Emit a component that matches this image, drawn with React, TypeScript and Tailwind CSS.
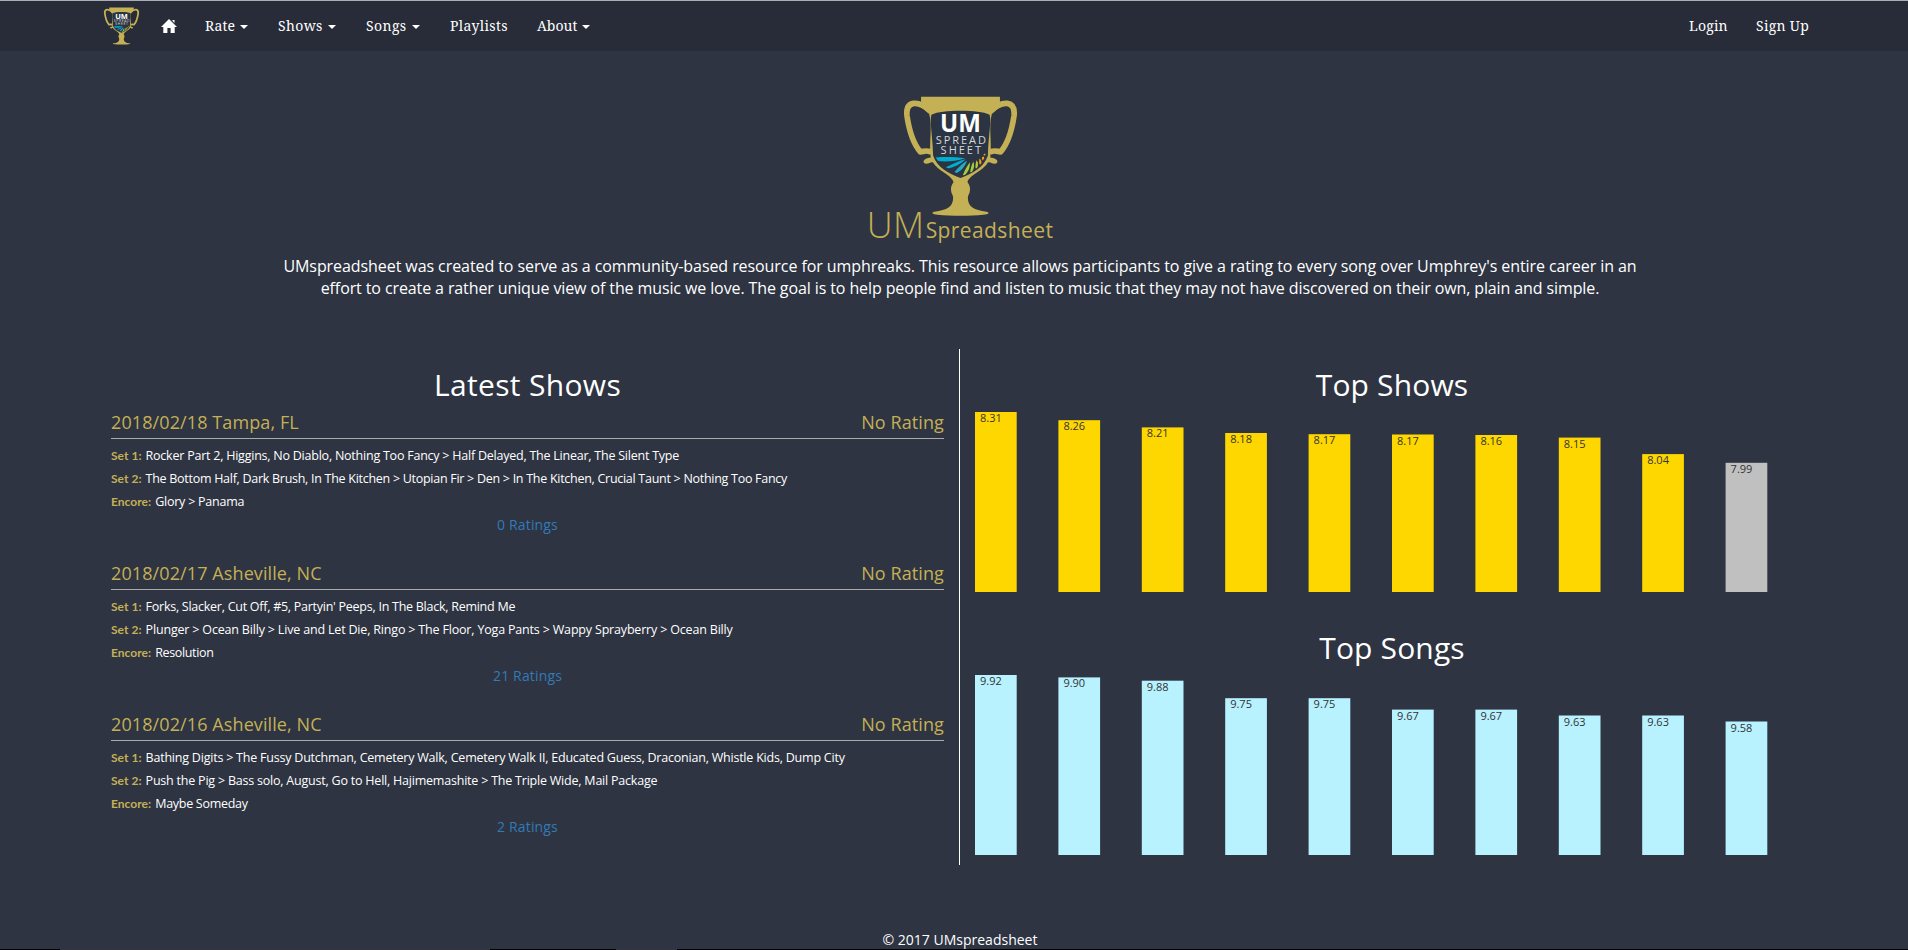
type SetLine = { label: string; songs: string; tracking: string };
type Show = { date: string; place: string; ratings: string; sets: SetLine[] };

const shows: Show[] = [
  {
    date: "2018/02/18",
    place: "Tampa, FL",
    ratings: "0 Ratings",
    sets: [
      { label: "Set 1:", songs: "Rocker Part 2, Higgins, No Diablo, Nothing Too Fancy > Half Delayed, The Linear, The Silent Type", tracking: "tracking-[-0.232px]" },
      { label: "Set 2:", songs: "The Bottom Half, Dark Brush, In The Kitchen > Utopian Fir > Den > In The Kitchen, Crucial Taunt > Nothing Too Fancy", tracking: "tracking-[-0.28px]" },
      { label: "Encore:", songs: "Glory > Panama", tracking: "tracking-[-0.24px]" },
    ],
  },
  {
    date: "2018/02/17",
    place: "Asheville, NC",
    ratings: "21 Ratings",
    sets: [
      { label: "Set 1:", songs: "Forks, Slacker, Cut Off, #5, Partyin' Peeps, In The Black, Remind Me", tracking: "tracking-[-0.26px]" },
      { label: "Set 2:", songs: "Plunger > Ocean Billy > Live and Let Die, Ringo > The Floor, Yoga Pants > Wappy Sprayberry > Ocean Billy", tracking: "tracking-[-0.18px]" },
      { label: "Encore:", songs: "Resolution", tracking: "tracking-[-0.35px]" },
    ],
  },
  {
    date: "2018/02/16",
    place: "Asheville, NC",
    ratings: "2 Ratings",
    sets: [
      { label: "Set 1:", songs: "Bathing Digits > The Fussy Dutchman, Cemetery Walk, Cemetery Walk II, Educated Guess, Draconian, Whistle Kids, Dump City", tracking: "tracking-[-0.217px]" },
      { label: "Set 2:", songs: "Push the Pig > Bass solo, August, Go to Hell, Hajimemashite > The Triple Wide, Mail Package", tracking: "tracking-[-0.215px]" },
      { label: "Encore:", songs: "Maybe Someday", tracking: "tracking-[-0.28px]" },
    ],
  },
];

type Bar = { value: string; top: number; color: string };
const gold = "#ffd700";
const silver = "#c0c0c0";
const ice = "#b8f2ff";

const topShows: Bar[] = [
  { value: "8.31", top: 0, color: gold },
  { value: "8.26", top: 8.2, color: gold },
  { value: "8.21", top: 15.4, color: gold },
  { value: "8.18", top: 21, color: gold },
  { value: "8.17", top: 22.2, color: gold },
  { value: "8.17", top: 22.5, color: gold },
  { value: "8.16", top: 23, color: gold },
  { value: "8.15", top: 25.6, color: gold },
  { value: "8.04", top: 42.1, color: gold },
  { value: "7.99", top: 50.8, color: silver },
];

const topSongs: Bar[] = [
  { value: "9.92", top: 0, color: ice },
  { value: "9.90", top: 2.4, color: ice },
  { value: "9.88", top: 5.7, color: ice },
  { value: "9.75", top: 23.2, color: ice },
  { value: "9.75", top: 23.2, color: ice },
  { value: "9.67", top: 34.6, color: ice },
  { value: "9.67", top: 34.6, color: ice },
  { value: "9.63", top: 40.5, color: ice },
  { value: "9.63", top: 40.5, color: ice },
  { value: "9.58", top: 46.5, color: ice },
];

function Chart({ bars }: { bars: Bar[] }) {
  return (
    <svg className="mt-[11px] block h-[180px] w-[834px] overflow-visible" viewBox="0 0 834 180">
      {bars.map((b, i) => (
        <g key={i}>
          <rect x={i * 83.4} y={b.top} width={41.7} height={180 - b.top} fill={b.color} />
          <text x={i * 83.4 + 5} y={Math.round(b.top) + 10} className="fill-[#333] font-['Open_Sans',sans-serif] text-[11px]">
            {b.value}
          </text>
        </g>
      ))}
    </svg>
  );
}

function Trophy({ className }: { className: string }) {
  return (
    <svg className={className} viewBox="155 45 350 365">
      <g fill="none" stroke="#c4b055" strokeWidth="17" strokeLinejoin="round" strokeLinecap="round">
        <path d="M238 92C216 70 200 69 190 70C170 73 168 92 170 108C176 148 190 192 210 215C220 214 226 210 238 214" />
        <path d="M422 92C444 70 460 69 470 70C490 73 492 92 490 108C484 148 470 192 450 215C440 214 434 210 422 214" />
      </g>
      <path d="M236 100C247 140 235 190 241 232C216 234 214 250 228 251C238 251 240 244 248 247C262 272 306 286 309 306C303 314 300 324 302 332C302 340 308 344 308 352C308 380 290 390 252 394C242 396 244 402 262 403C300 407 360 407 398 403C416 402 418 396 408 394C370 390 352 380 352 352C352 344 358 340 358 332C360 324 357 314 351 306C354 286 398 272 412 247C420 244 422 251 432 251C446 250 444 234 419 232C425 190 413 140 424 100C434 94 446 84 448 70V50H212V70C214 84 226 94 236 100Z" fill="#c4b055" />
      <path d="M243 104C262 95 290 92 330 92C370 92 398 95 417 104C423 124 413 170 412 226C400 262 366 280 330 293C294 280 260 262 248 226C247 170 237 124 243 104Z" fill="#2b3442" />
      <path d="M256 232C286 229 318 231 344 234C318 243 280 246 262 242Z" fill="#00aed0" />
      <path d="M286 261C308 250 326 241 346 237C332 250 310 262 292 264Z" fill="#00aed0" />
      <path d="M312 275C324 262 334 250 350 241C344 258 334 271 319 278Z" fill="#25a9c4" />
      <path d="M337 285C342 270 350 257 358 246C359 260 354 275 343 284Z" fill="#a5cd39" />
      <path d="M359 276C360 264 364 254 368 244C373 254 371 266 364 275Z" fill="#a5cd39" />
      <path d="M375 264C374 254 376 247 378 240C384 247 384 256 379 264Z" fill="#b9c832" />
      <path d="M387 252C385 246 386 240 387 235C393 240 394 246 391 252Z" fill="#f49b20" />
      <path d="M395 241L394 231L400 229L401 236ZM400 226L399 222L404 220L405 225Z" fill="#f49b20" />
      <text x="330" y="157" textAnchor="middle" textLength="122" lengthAdjust="spacingAndGlyphs" className="fill-white font-['Open_Sans',sans-serif] text-[73px] font-bold">UM</text>
      <text x="331" y="191" textAnchor="middle" textLength="150" className="fill-[#d4d7dc] font-['Open_Sans',sans-serif] text-[33px]">SPREAD</text>
      <text x="331" y="221" textAnchor="middle" textLength="121" className="fill-[#d4d7dc] font-['Open_Sans',sans-serif] text-[33px]">SHEET</text>
    </svg>
  );
}

function Caret() {
  return (
    <svg className="ml-[5px] mt-[3px] h-1 w-2" viewBox="0 0 8 4">
      <path d="M0 0H8L4 4Z" fill="#fff" />
    </svg>
  );
}

function NavItem({ label, width, tracking, caret }: { label: string; width: string; tracking: string; caret?: boolean }) {
  return (
    <a className={`flex items-center ${width}`}>
      <span className={tracking}>{label}</span>
      {caret && <Caret />}
    </a>
  );
}

export default function App() {
  return (
    <div className="flex h-screen flex-col overflow-hidden whitespace-nowrap bg-[#2e3442] font-['Open_Sans',sans-serif] text-white">
      <header className="h-[51px] shrink-0 border-t border-[#abadb1] bg-[#272c38]">
        <nav className="flex h-[49px] items-center pl-[103px] pr-[99px] font-['Noto_Serif','DejaVu_Serif',serif] text-[14px] leading-5">
          <Trophy className="h-[38px] w-[37px]" />
          <svg className="ml-[21px] mr-[28px] mt-px h-[14px] w-4" viewBox="0 0 16 14">
            <path d="M8 0L16 8H13.7V14H9.6V9H6.4V14H2.3V8H0L8 0ZM11.5 1H13.5V4L11.5 2Z" fill="#fff" />
          </svg>
          <NavItem label="Rate" width="w-[73px]" tracking="tracking-[0.2px]" caret />
          <NavItem label="Shows" width="w-[88px]" tracking="tracking-[0.35px]" caret />
          <NavItem label="Songs" width="w-[84px]" tracking="tracking-[0.4px]" caret />
          <NavItem label="Playlists" width="w-[87px]" tracking="tracking-[0.35px]" />
          <NavItem label="About" width="w-[80px]" tracking="tracking-[0px]" caret />
          <div className="ml-auto flex">
            <NavItem label="Login" width="w-[67px]" tracking="tracking-[0.2px]" />
            <NavItem label="Sign Up" width="w-[53px]" tracking="tracking-[0.3px]" />
          </div>
        </nav>
      </header>

      <main className="ml-[96px] w-[1728px] shrink-0 pt-[44px]">
        <div className="flex flex-col items-center">
          <Trophy className="h-[122px] w-[117px]" />
          <h1 className="mt-[-12px] flex h-[39px] items-baseline text-[#c4b055]">
            <span className="text-[36px] leading-10 font-light tracking-[0.5px]">UM</span>
            <span className="ml-px text-[21px] leading-6 tracking-[0.4px]">Spreadsheet</span>
          </h1>
          <p className="mt-[11px] text-center text-[16px] leading-[22px]">
            <span className="tracking-[-0.075px]">
              UMspreadsheet was created to serve as a community-based resource for umphreaks. This resource allows participants to give a rating to every song over Umphrey's entire career in an
            </span>
            <br />
            <span className="tracking-[-0.108px]">
              effort to create a rather unique view of the music we love. The goal is to help people find and listen to music that they may not have discovered on their own, plain and simple.
            </span>
          </p>
        </div>

        <div className="mt-[50px] flex h-[516px]">
          <section className="w-[864px] border-r border-white pl-[15px] pr-[15px] pt-[19px]">
            <h2 className="mb-[10px] text-center text-[30px] leading-[33px] tracking-[0.33px]">Latest Shows</h2>
            {shows.map((s) => (
              <article key={s.date} className="mb-[27px]">
                <div className="flex h-[28px] justify-between border-b border-[#abaaa6] text-[18px] leading-[22px] tracking-[0.1px] text-[#c4b055]">
                  <span>{s.date} {s.place}</span>
                  <span>No Rating</span>
                </div>
                <div className="mt-[5px]">
                  {s.sets.map((l) => (
                    <div key={l.label} className="flex h-[23px] items-baseline gap-1 leading-[23px]">
                      <span className="font-['Lato',sans-serif] text-[12px] font-bold tracking-[0.04px] text-[#c4b055]">{l.label}</span>
                      <span className={`text-[12.5px] ${l.tracking}`}>{l.songs}</span>
                    </div>
                  ))}
                </div>
                <div className="mt-[2px] text-center text-[14px] leading-5 font-medium tracking-[0.15px] text-[#337ab7]">{s.ratings}</div>
              </article>
            ))}
          </section>

          <section className="w-[864px] px-[15px] pt-[19px]">
            <h2 className="text-center text-[30px] leading-[33px] tracking-[0.15px]">Top Shows</h2>
            <Chart bars={topShows} />
            <h2 className="mt-[39px] text-center text-[30px] leading-[33px] tracking-[0.15px]">Top Songs</h2>
            <Chart bars={topSongs} />
          </section>
        </div>
      </main>

      <footer className="ml-[96px] mt-[65px] h-[19px] w-[1728px] shrink-0 text-center text-[14px] leading-5">© 2017 UMspreadsheet</footer>
      <div className="flex h-px shrink-0 bg-black">
        <div className="ml-[60px] h-px w-[430px] bg-[#37333a]" />
        <div className="ml-[126px] h-px w-[61px] bg-[#37333a]" />
      </div>
    </div>
  );
}
